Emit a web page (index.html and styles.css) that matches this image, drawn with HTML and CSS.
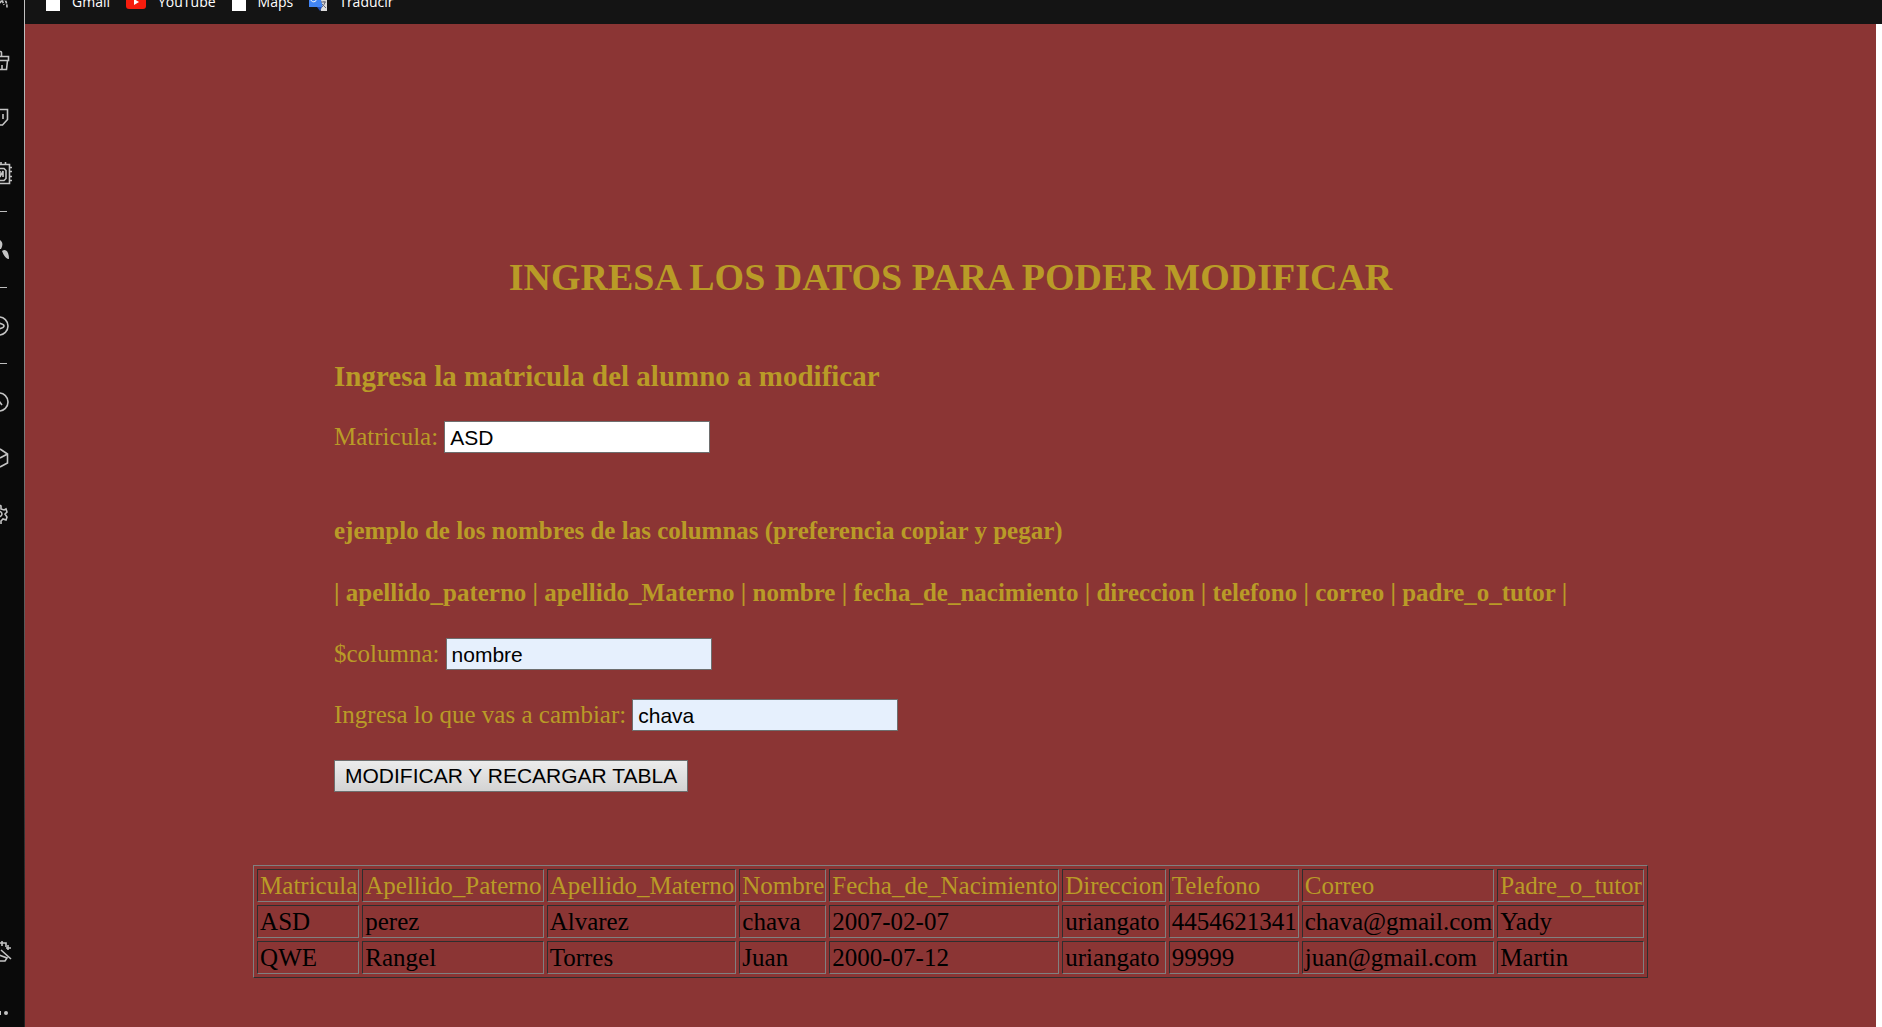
FILE: index.html
```html
<!DOCTYPE html>
<html lang="es">
<head>
<meta charset="utf-8">
<title>Modificar alumno</title>
<link rel="stylesheet" href="styles.css">
</head>
<body>
<nav class="sidebar" aria-label="Barra lateral">
  <button class="tool" aria-label="Inicio"><svg viewBox="0 0 24 24"><path d="M12 9l2-3 2 5M14 5q5 0 5 9" stroke-dasharray="3 1"/></svg></button>
  <button class="tool" aria-label="Compras"><svg viewBox="0 0 24 24"><path d="M10 1.500h2.500q1 0 1 1v4M5 6.500h15.500v4H5M19.500 10.500l-1 9H5M14 15v4"/></svg></button>
  <button class="tool" aria-label="Twitch"><svg viewBox="0 0 24 24"><path d="M4 3.500h15.500v10l-5 5.500h-4M15 8v5"/></svg></button>
  <button class="tool" aria-label="Control"><svg viewBox="0 0 24 24"><path d="M8 2.500h13.500v19H8M12 6.500h4l2 2v8l-2 2h-4M12 9v6l3-6v6M21 5.500h3M21 9.500h3M21 14.500h3M21 18.500h3M13 0v3M17.500 0v3"/></svg></button>
  <hr class="rule">
  <button class="tool" aria-label="Aplicaciones"><svg viewBox="0 0 24 24"><path class="solid" d="M12 2c3 2 3 5 1 9h-3zM14 13c4-3 7 1 7 8q-4 0-7-8z"/></svg></button>
  <hr class="rule">
  <button class="tool" aria-label="Reproductor"><svg viewBox="0 0 24 24"><circle cx="11" cy="12" r="9"/><path d="M10 9q6 1 6 3t-6 3"/></svg></button>
  <hr class="rule">
  <button class="tool" aria-label="Historial"><svg viewBox="0 0 24 24"><circle cx="11" cy="12" r="9"/><path d="M11 11l3 4"/></svg></button>
  <button class="tool" aria-label="Extensiones"><svg viewBox="0 0 24 24"><path d="M12 3l7.500 5v9L12 21M12 12l7.500-4"/></svg></button>
  <button class="tool" aria-label="Ajustes"><svg viewBox="0 0 24 24"><path d="M11 3l2 1v3l3 1 2-1 1 3-2 2 2 3-1 3-3-1-2 2v3M11 9q3 1 3 3t-3 3"/></svg></button>
  <div class="sidebar-end">
    <button class="tool" aria-label="Consejos"><svg viewBox="0 0 24 24"><path d="M12 3h6v4M14 1v5M20 5v5M18 8h5M13 10l10 9M11 15l8 3-2 3H10"/></svg></button>
    <button class="tool" aria-label="Más"><svg viewBox="0 0 24 24"><path class="solid" d="M11 10h2v4h-2z"/><circle class="solid" cx="18" cy="12" r="2"/></svg></button>
  </div>
</nav>
<div class="window">
  <nav class="bookmarks" aria-label="Marcadores">
    <a href="#gmail"><span class="sheet"></span>Gmail</a>
    <a href="#youtube"><svg class="youtube" viewBox="0 0 20 14"><rect width="20" height="14" rx="3" fill="#f61c0d"/><path d="M8 4l5 3-5 3z" fill="#fff"/></svg>YouTube</a>
    <a href="#maps"><span class="sheet"></span>Maps</a>
    <a href="#traducir"><svg class="translate" viewBox="0 0 18 18"><path d="M7 4h11v14h-6z" fill="#dcdcdc"/><path d="M0 0h10l4 14H0z" fill="#4285f4"/><path d="M8 14h5l-2 4z" fill="#2450b8"/><path d="M7.500 6.500a3 3 0 1 1-1-3M5 6.500h3" fill="none" stroke="#fff"/><path d="M12 9h5M15 8v1M16 9q-1 4-3 5M13 11l4 4" fill="none" stroke="#667"/></svg>Traducir</a>
  </nav>
  <main class="page">
    <h1>INGRESA LOS DATOS PARA PODER MODIFICAR</h1>
    <form class="form">
      <h2>Ingresa la matricula del alumno a modificar</h2>
      <div class="field matricula"><label for="matricula">Matricula:</label><input id="matricula" type="text" value="ASD"></div>
      <h3>ejemplo de los nombres de las columnas (preferencia copiar y pegar)</h3>
      <h3>| apellido_paterno | apellido_Materno | nombre | fecha_de_nacimiento | direccion | telefono | correo | padre_o_tutor |</h3>
      <div class="field"><label for="columna">$columna:</label><input id="columna" class="filled" type="text" value="nombre"></div>
      <div class="field"><label for="cambio">Ingresa lo que vas a cambiar:</label><input id="cambio" class="filled" type="text" value="chava"></div>
      <button class="submit" type="button">MODIFICAR Y RECARGAR TABLA</button>
    </form>
    <table class="students">
      <thead>
        <tr><th>Matricula</th><th>Apellido_Paterno</th><th>Apellido_Materno</th><th>Nombre</th><th>Fecha_de_Nacimiento</th><th>Direccion</th><th>Telefono</th><th>Correo</th><th>Padre_o_tutor</th></tr>
      </thead>
      <tbody>
        <tr><td>ASD</td><td>perez</td><td>Alvarez</td><td>chava</td><td>2007-02-07</td><td>uriangato</td><td>4454621341</td><td>chava@gmail.com</td><td>Yady</td></tr>
        <tr><td>QWE</td><td>Rangel</td><td>Torres</td><td>Juan</td><td>2000-07-12</td><td>uriangato</td><td>99999</td><td>juan@gmail.com</td><td>Martin</td></tr>
      </tbody>
    </table>
  </main>
</div>
</body>
</html>
```
FILE: styles.css
```css
* { box-sizing: border-box; }

body {
  margin: 0;
  display: flex;
  height: 100vh;
  overflow: hidden;
  background: #fff;
  font-family: "Liberation Serif", "Times New Roman", serif;
  font-size: 25px;
  line-height: 29px;
}

/* Sidebar */
.sidebar {
  flex: none;
  width: 25px;
  display: flex;
  flex-direction: column;
  overflow: hidden;
  background: #0a0a0a;
  border-right: 1px solid;
  border-image: linear-gradient(#c4c4c4, #777 45%, #222 90%) 1;
}
.tool {
  flex: none;
  display: block;
  width: 24px;
  height: 56px;
  padding: 0;
  border: 0;
  background: none;
}
.tool:first-child { margin-top: -22px; }
.tool svg {
  display: block;
  width: 24px;
  height: 24px;
  margin-left: -12px;
  overflow: visible;
  fill: none;
  stroke: #c4c4c4;
  stroke-width: 1.6;
}
.tool .solid { fill: #c4c4c4; stroke: none; }
.rule {
  flex: none;
  width: 7px;
  height: 1px;
  margin: 9px 0 10px;
  border: 0;
  background: #bdbdbd;
}
.sidebar-end {
  display: flex;
  flex-direction: column;
  gap: 5px;
  margin-top: auto;
  margin-bottom: -14px;
}

/* Browser window */
.window {
  flex: 1;
  min-width: 0;
  display: flex;
  flex-direction: column;
}
.bookmarks {
  flex: none;
  display: flex;
  align-items: flex-end;
  gap: 16px;
  height: 24px;
  padding: 0 21px 12px;
  overflow: hidden;
  background: #141414;
  font: 14px/20px "Open Sans", "Noto Sans", sans-serif;
}
.bookmarks a {
  display: flex;
  align-items: center;
  gap: 12px;
  color: #fff;
  text-decoration: none;
}
.sheet { width: 14px; height: 18px; background: #fff; }
.youtube { width: 20px; height: 14px; }
.translate { width: 18px; height: 18px; }

/* Page */
.page {
  flex: 1;
  margin-right: 6px;
  padding-top: 231px;
  background: #8b3534;
}
h1, h2, h3 { margin: 0; }
h1, h2, h3, .field, .students th { color: #b99b27; }
h1 {
  font-size: 38px;
  line-height: 44px;
  text-align: center;
}
h2 { font-size: 29px; line-height: 32px; }
h3 { font-size: 25px; line-height: 33px; white-space: nowrap; }
.form {
  display: flex;
  flex-direction: column;
  align-items: flex-start;
  gap: 29px;
  margin-top: 61px;
  padding-left: 309px;
}
.field {
  display: flex;
  align-items: baseline;
  gap: 6px;
}
.matricula { margin-bottom: 32px; }
.field input, .submit {
  height: 32px;
  border: 1px solid #6e6e6e;
  color: #000;
  font: 21px/24px "Liberation Sans", Arial, sans-serif;
}
.field input {
  width: 266px;
  padding: 2px 5px 0;
  background: #fff;
}
.field .filled { background: #e6f0fd; }
.submit {
  padding: 0 10px;
  background: linear-gradient(#ececec, #d3d3d3);
}

.students {
  margin: 73px auto 0;
  border: 1px solid;
  border-color: #808080 #2e2e2e #2e2e2e #808080;
  border-collapse: separate;
  border-spacing: 3px;
}
.students th, .students td {
  padding: 1px 1px 1px 2px;
  border: 1px solid;
  border-color: #2e2e2e #808080 #808080 #2e2e2e;
  font-weight: 400;
  text-align: left;
}
```
